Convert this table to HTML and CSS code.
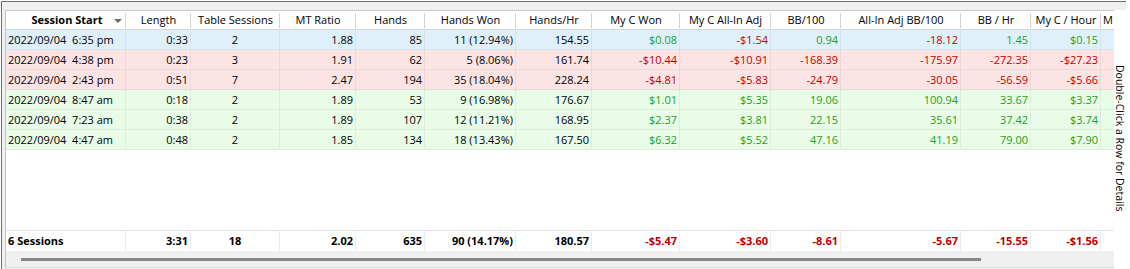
FILE: index.html
```html
<!DOCTYPE html>
<html>
<head>
<meta charset="utf-8">
<link rel="stylesheet" href="styles.css">
</head>
<body>
<div class="frame">
  <div class="band"></div>
  <div class="main">
    <div class="strip"></div>
    <div class="grid">
      <div class="cols head">
        <div class="h sort"><span class="htext">Session Start</span><span class="arrow"></span></div>
        <div class="h">Length</div>
        <div class="h">Table Sessions</div>
        <div class="h">MT Ratio</div>
        <div class="h">Hands</div>
        <div class="h">Hands Won</div>
        <div class="h">Hands/Hr</div>
        <div class="h">My C Won</div>
        <div class="h">My C All-In Adj</div>
        <div class="h">BB/100</div>
        <div class="h">All-In Adj BB/100</div>
        <div class="h">BB / Hr</div>
        <div class="h">My C / Hour</div>
        <div class="h last">M</div>
      </div>
      <div class="rows">
        <div class="cols row blue">
          <div class="c l">2022/09/04  6:35 pm</div><div class="c r">0:33</div><div class="c m">2</div><div class="c r">1.88</div><div class="c r">85</div><div class="c r">11 (12.94%)</div><div class="c r">154.55</div><div class="c r g">$0.08</div><div class="c r n">-$1.54</div><div class="c r g">0.94</div><div class="c r n">-18.12</div><div class="c r g">1.45</div><div class="c r g">$0.15</div><div class="c e"></div>
        </div>
        <div class="cols row pink">
          <div class="c l">2022/09/04  4:38 pm</div><div class="c r">0:23</div><div class="c m">3</div><div class="c r">1.91</div><div class="c r">62</div><div class="c r">5 (8.06%)</div><div class="c r">161.74</div><div class="c r n">-$10.44</div><div class="c r n">-$10.91</div><div class="c r n">-168.39</div><div class="c r n">-175.97</div><div class="c r n">-272.35</div><div class="c r n">-$27.23</div><div class="c e"></div>
        </div>
        <div class="cols row pink">
          <div class="c l">2022/09/04  2:43 pm</div><div class="c r">0:51</div><div class="c m">7</div><div class="c r">2.47</div><div class="c r">194</div><div class="c r">35 (18.04%)</div><div class="c r">228.24</div><div class="c r n">-$4.81</div><div class="c r n">-$5.83</div><div class="c r n">-24.79</div><div class="c r n">-30.05</div><div class="c r n">-56.59</div><div class="c r n">-$5.66</div><div class="c e"></div>
        </div>
        <div class="cols row green">
          <div class="c l">2022/09/04  8:47 am</div><div class="c r">0:18</div><div class="c m">2</div><div class="c r">1.89</div><div class="c r">53</div><div class="c r">9 (16.98%)</div><div class="c r">176.67</div><div class="c r g">$1.01</div><div class="c r g">$5.35</div><div class="c r g">19.06</div><div class="c r g">100.94</div><div class="c r g">33.67</div><div class="c r g">$3.37</div><div class="c e"></div>
        </div>
        <div class="cols row green">
          <div class="c l">2022/09/04  7:23 am</div><div class="c r">0:38</div><div class="c m">2</div><div class="c r">1.89</div><div class="c r">107</div><div class="c r">12 (11.21%)</div><div class="c r">168.95</div><div class="c r g">$2.37</div><div class="c r g">$3.81</div><div class="c r g">22.15</div><div class="c r g">35.61</div><div class="c r g">37.42</div><div class="c r g">$3.74</div><div class="c e"></div>
        </div>
        <div class="cols row green">
          <div class="c l">2022/09/04  4:47 am</div><div class="c r">0:48</div><div class="c m">2</div><div class="c r">1.85</div><div class="c r">134</div><div class="c r">18 (13.43%)</div><div class="c r">167.50</div><div class="c r g">$6.32</div><div class="c r g">$5.52</div><div class="c r g">47.16</div><div class="c r g">41.19</div><div class="c r g">79.00</div><div class="c r g">$7.90</div><div class="c e"></div>
        </div>
      </div>
      <div class="filler"></div>
      <div class="cols foot">
        <div class="c l">6 Sessions</div><div class="c r">3:31</div><div class="c m">18</div><div class="c r">2.02</div><div class="c r">635</div><div class="c r">90 (14.17%)</div><div class="c r">180.57</div><div class="c r n">-$5.47</div><div class="c r n">-$3.60</div><div class="c r n">-8.61</div><div class="c r n">-5.67</div><div class="c r n">-15.55</div><div class="c r n">-$1.56</div><div class="c e"></div>
      </div>
      <div class="hscroll"><div class="thumb"></div></div>
    </div>
    <div class="label"><span class="vtext">Double-Click a Row for Details</span></div>
  </div>
</div>
</body>
</html>
```
FILE: styles.css
```css
html, body {
  margin: 0;
  padding: 0;
  background: #ffffff;
}
body {
  font-family: "Open Sans", "Noto Sans", sans-serif;
  font-size: 11px;
  color: #000000;
}
.frame {
  margin: 1px 0 0 1px;
  width: 1125px;
  height: 268px;
  box-sizing: border-box;
  border-top: 1px solid #707070;
  border-left: 1px solid #707070;
  background: #f0f0f0;
  display: flex;
  flex-direction: column;
}
.band {
  height: 8px;
  flex: none;
}
.main {
  display: flex;
  align-items: flex-start;
  flex: 1;
}
.strip {
  width: 3px;
  flex: none;
}
.grid {
  width: 1109px;
  height: 258px;
  flex: none;
  box-sizing: border-box;
  border-top: 1px solid #cbcbcb;
  border-left: 1px solid #c4c4c4;
  border-bottom: 1px solid #dcdcdc;
  background: #ffffff;
  display: flex;
  flex-direction: column;
}
.label {
  flex: 1;
  align-self: stretch;
  background: #ffffff;
  display: flex;
  align-items: center;
  justify-content: center;
  padding-bottom: 2px;
}
.vtext {
  writing-mode: vertical-rl;
  font-size: 10.5px;
  line-height: 12px;
  white-space: nowrap;
  color: #000;
}
.cols {
  display: grid;
  grid-template-columns: 120px 65px 89px 76px 69px 91px 76px 88px 91px 70px 120px 70px 70px 13px;
}
.head {
  height: 19px;
  box-sizing: border-box;
  border-bottom: 1px solid #d8d8d8;
  background: #ffffff;
  flex: none;
}
.h {
  position: relative;
  text-align: center;
  line-height: 18px;
  white-space: nowrap;
  overflow: hidden;
}
.h::after {
  content: "";
  position: absolute;
  right: 0;
  top: 2px;
  bottom: 1px;
  width: 1px;
  background: #d4d4d4;
}
.h.last {
  text-align: left;
  padding-left: 2px;
}
.h.last::after {
  display: none;
}
.h.sort {
  display: flex;
  align-items: center;
  padding: 0 4px 0 14px;
}
.htext {
  flex: 1;
  text-align: center;
  font-weight: bold;
}
.arrow {
  width: 0;
  height: 0;
  border-left: 4px solid transparent;
  border-right: 4px solid transparent;
  border-top: 4px solid #6c6c6c;
  margin-top: 2px;
}
.rows {
  flex: none;
}
.row {
  height: 20px;
  box-sizing: border-box;
  border-bottom: 1px solid rgba(0, 0, 0, 0.05);
}
.blue { background: #dff0fa; }
.pink { background: #fde4e4; }
.green { background: #e8fce8; }
.c {
  padding: 0 2px;
  line-height: 19px;
  white-space: pre;
  overflow: hidden;
  border-right: 1px solid rgba(0, 0, 0, 0.05);
}
.c.e {
  border-right: none;
}
.l { text-align: left; }
.r { text-align: right; }
.m { text-align: center; }
.g { color: #1f9e1f; }
.n { color: #c00000; }
.filler {
  flex: 1;
}
.foot {
  height: 21px;
  box-sizing: border-box;
  border-top: 1px solid #e2e2e2;
  font-weight: bold;
  flex: none;
}
.foot .c {
  line-height: 20px;
  border-right-color: #ececec;
}
.hscroll {
  height: 16px;
  flex: none;
  background: #f0f0f0;
  display: flex;
  align-items: center;
}
.thumb {
  margin-left: 15px;
  width: 960px;
  height: 3px;
  background: #878787;
}
```
